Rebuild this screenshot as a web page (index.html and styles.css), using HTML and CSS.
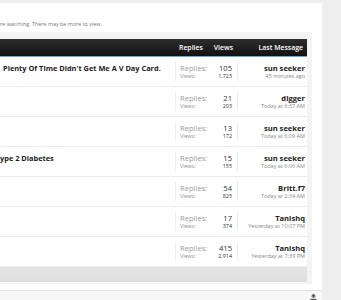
FILE: index.html
```html
<!DOCTYPE html>
<html lang="en">
<head>
    <meta charset="UTF-8">
    <meta name="viewport" content="width=device-width, initial-scale=1.0">
    <title>Watched Threads</title>
    <link rel="stylesheet" href="styles.css">
</head>
<body>
    <div class="page">
        <p class="intro">re watching. There may be more to view.</p>
        <div class="frame">
            <div class="head">
                <span></span>
                <span class="h-replies">Replies</span>
                <span class="h-views">Views</span>
                <span class="h-last">Last Message</span>
            </div>

            <div class="row">
                <div class="title">Plenty Of Time Didn't Get Me A V Day Card.</div>
                <div class="stats">
                    <span class="lbl">Replies:</span><span class="num">105</span>
                    <span class="lbl small">Views:</span><span class="num small">1,723</span>
                </div>
                <div class="last"><b>sun seeker</b><span>45 minutes ago</span></div>
            </div>

            <div class="row">
                <div class="title"></div>
                <div class="stats">
                    <span class="lbl">Replies:</span><span class="num">21</span>
                    <span class="lbl small">Views:</span><span class="num small">203</span>
                </div>
                <div class="last"><b>digger</b><span>Today at 6:37 AM</span></div>
            </div>

            <div class="row">
                <div class="title"></div>
                <div class="stats">
                    <span class="lbl">Replies:</span><span class="num">13</span>
                    <span class="lbl small">Views:</span><span class="num small">172</span>
                </div>
                <div class="last"><b>sun seeker</b><span>Today at 6:09 AM</span></div>
            </div>

            <div class="row">
                <div class="title flush">ype 2 Diabetes</div>
                <div class="stats">
                    <span class="lbl">Replies:</span><span class="num">15</span>
                    <span class="lbl small">Views:</span><span class="num small">155</span>
                </div>
                <div class="last"><b>sun seeker</b><span>Today at 6:06 AM</span></div>
            </div>

            <div class="row">
                <div class="title"></div>
                <div class="stats">
                    <span class="lbl">Replies:</span><span class="num">54</span>
                    <span class="lbl small">Views:</span><span class="num small">825</span>
                </div>
                <div class="last"><b>Britt.f7</b><span>Today at 2:34 AM</span></div>
            </div>

            <div class="row">
                <div class="title"></div>
                <div class="stats">
                    <span class="lbl">Replies:</span><span class="num">17</span>
                    <span class="lbl small">Views:</span><span class="num small">374</span>
                </div>
                <div class="last"><b>Tanishq</b><span>Yesterday at 10:07 PM</span></div>
            </div>

            <div class="row">
                <div class="title"></div>
                <div class="stats">
                    <span class="lbl">Replies:</span><span class="num">415</span>
                    <span class="lbl small">Views:</span><span class="num small">2,914</span>
                </div>
                <div class="last"><b>Tanishq</b><span>Yesterday at 7:39 PM</span></div>
            </div>

            <div class="foot"></div>
        </div>
    </div>
    <div class="bottom">
        <svg class="top-link" width="7" height="7" viewBox="0 0 7 7">
            <path d="M3.5 0.5 L6 3.5 H4.3 V5 H2.7 V3.5 H1 Z" fill="#555"/>
            <rect x="0.5" y="5.8" width="6" height="1.2" fill="#555"/>
        </svg>
    </div>
</body>
</html>
```

FILE: styles.css
```css
body {
    margin: 0;
    background-color: #eeeeee;
    font-family: "Open Sans", "Liberation Sans", sans-serif;
    color: #222;
    overflow: hidden;
}
.page {
    width: 322px;
    margin-top: 3px;
    height: 287px;
    background-color: #fff;
    overflow: hidden;
}
.intro {
    margin: 0;
    padding-top: 18px;
    height: 11px;
    font-size: 5.4px;
    line-height: 7px;
    color: #777;
}
.frame {
    width: 307px;
    padding: 7px 5px 2px 0;
    background-color: #f4f4f4;
}
.head {
    display: grid;
    grid-template-columns: 175px 37px 26px 69px;
    height: 17px;
    line-height: 17px;
    background: linear-gradient(#2e2e2e, #111);
    border-bottom: 1px solid #5aaee0;
    color: #fff;
    font-size: 6.9px;
    font-weight: 600;
}
.h-replies {
    padding-left: 4px;
}
.h-views {
    text-align: right;
    padding-right: 5px;
}
.h-last {
    text-align: right;
    padding-right: 4px;
}
.row {
    display: grid;
    grid-template-columns: 175px 63px 69px;
    height: 29px;
    background-color: #fff;
    border-bottom: 1px solid #ececec;
}
.title {
    padding: 7px 0 0 3px;
    font-size: 7.4px;
    font-weight: 700;
    line-height: 9px;
    white-space: nowrap;
}
.title.flush {
    padding-left: 0;
}
.stats {
    display: grid;
    grid-template-columns: 1fr auto;
    align-content: center;
    margin: 5px 0;
    padding: 0 5px 0 4px;
    border-left: 1px solid #eeeeee;
    border-right: 1px solid #eeeeee;
}
.lbl {
    font-size: 7.6px;
    line-height: 9px;
    color: #9a9a9a;
}
.num {
    font-size: 7.6px;
    line-height: 9px;
    color: #333;
    text-align: right;
}
.small {
    font-size: 5.4px;
    line-height: 7px;
}
.lbl.small {
    color: #8c8c8c;
}
.last {
    display: flex;
    flex-direction: column;
    align-items: flex-end;
    justify-content: center;
    padding-right: 2px;
}
.last b {
    font-size: 7.6px;
    line-height: 9px;
    font-weight: 700;
    color: #222;
}
.last span {
    font-size: 5.5px;
    line-height: 7px;
    color: #888;
}
.foot {
    height: 15px;
    background: linear-gradient(#e6e6e6, #dedede);
}
.bottom {
    width: 322px;
    height: 10px;
    border-top: 1px solid #e2e2e2;
    background-color: #f7f7f7;
    display: flex;
    justify-content: flex-end;
    align-items: center;
}
.top-link {
    margin-right: 5px;
}
```
